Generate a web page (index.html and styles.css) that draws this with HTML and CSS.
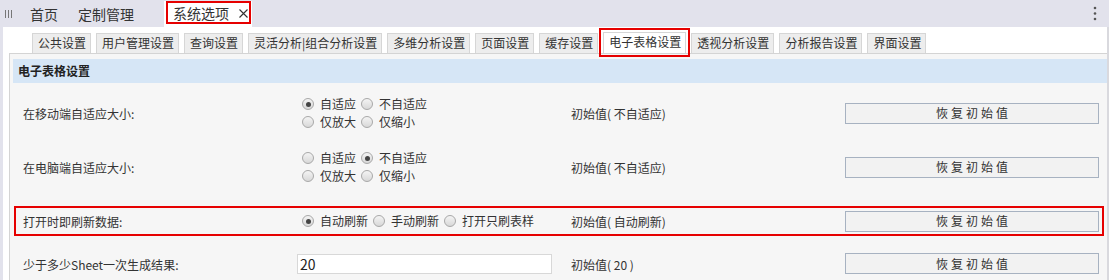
FILE: index.html
```html
<!DOCTYPE html>
<html lang="zh-CN">
<head>
<meta charset="utf-8">
<title>系统选项</title>
<link rel="stylesheet" href="styles.css">
</head>
<body>
<div class="app">
  <header class="topbar">
    <span class="grip"><svg width="8" height="8" viewBox="0 0 8 8"><path d="M0.5 0v8M3.5 0v8M6.5 0v8" stroke="#777" stroke-width="1"/></svg></span>
    <nav class="navtabs">
      <span class="navtab">首页</span>
      <span class="navtab">定制管理</span>
      <span class="navtab navtab-active"><span class="navtab-box">系统选项<svg class="close" width="9" height="9" viewBox="0 0 9 9"><path d="M0.5 0.5L8.5 8.5M8.5 0.5L0.5 8.5" stroke="#333" stroke-width="1.1"/></svg></span></span>
    </nav>
    <span class="more"><svg width="4" height="15" viewBox="0 0 4 15"><circle cx="2" cy="2" r="1.3" fill="#555"/><circle cx="2" cy="7.5" r="1.3" fill="#555"/><circle cx="2" cy="13" r="1.3" fill="#555"/></svg></span>
  </header>
  <main class="content">
    <div class="subtabs">
      <span class="subtab">公共设置</span>
      <span class="subtab">用户管理设置</span>
      <span class="subtab">查询设置</span>
      <span class="subtab">灵活分析|组合分析设置</span>
      <span class="subtab">多维分析设置</span>
      <span class="subtab">页面设置</span>
      <span class="subtab">缓存设置</span>
      <span class="subtab subtab-active">电子表格设置</span>
      <span class="subtab">透视分析设置</span>
      <span class="subtab">分析报告设置</span>
      <span class="subtab">界面设置</span>
    </div>
    <section class="panel">
      <div class="panel-head">电子表格设置</div>
      <div class="rows">
        <div class="row row-tall">
          <span class="label">在移动端自适应大小:</span>
          <div class="radios">
            <div class="radio-line">
              <label class="radio"><input type="radio" name="m" checked><span>自适应</span></label>
              <label class="radio"><input type="radio" name="m"><span>不自适应</span></label>
            </div>
            <div class="radio-line">
              <label class="radio"><input type="radio" name="m"><span>仅放大</span></label>
              <label class="radio"><input type="radio" name="m"><span>仅缩小</span></label>
            </div>
          </div>
          <span class="initial">初始值( 不自适应)</span>
          <button class="reset">恢复初始值</button>
        </div>
        <div class="row row-tall">
          <span class="label">在电脑端自适应大小:</span>
          <div class="radios">
            <div class="radio-line">
              <label class="radio"><input type="radio" name="p"><span>自适应</span></label>
              <label class="radio"><input type="radio" name="p" checked><span>不自适应</span></label>
            </div>
            <div class="radio-line">
              <label class="radio"><input type="radio" name="p"><span>仅放大</span></label>
              <label class="radio"><input type="radio" name="p"><span>仅缩小</span></label>
            </div>
          </div>
          <span class="initial">初始值( 不自适应)</span>
          <button class="reset">恢复初始值</button>
        </div>
        <div class="row row-highlight">
          <span class="label">打开时即刷新数据:</span>
          <div class="radios">
            <div class="radio-line">
              <label class="radio"><input type="radio" name="r" checked><span>自动刷新</span></label>
              <label class="radio"><input type="radio" name="r"><span>手动刷新</span></label>
              <label class="radio"><input type="radio" name="r"><span>打开只刷表样</span></label>
            </div>
          </div>
          <span class="initial">初始值( 自动刷新)</span>
          <button class="reset">恢复初始值</button>
        </div>
        <div class="row row-short">
          <span class="label">少于多少Sheet一次生成结果:</span>
          <div class="field"><input class="text-input" type="text" value="20"></div>
          <span class="initial">初始值( 20 )</span>
          <button class="reset">恢复初始值</button>
        </div>
      </div>
    </section>
  </main>
</div>
</body>
</html>
```

FILE: styles.css
```css
* { box-sizing: border-box; }

body {
  margin: 0;
  font-family: "Noto Sans CJK SC", "Microsoft YaHei", "Liberation Sans", sans-serif;
  font-size: 12px;
  color: #333;
  background: #fff;
}

.app {
  width: 1109px;
  height: 280px;
  overflow: hidden;
}

/* top bar */
.topbar {
  height: 27px;
  background: #e2e2ec;
  display: flex;
  align-items: stretch;
}

.grip {
  display: flex;
  align-items: center;
  padding-left: 5px;
  width: 20px;
}

.navtabs {
  display: flex;
  align-items: stretch;
  flex: 1;
}

.navtab {
  display: flex;
  align-items: center;
  padding: 0 10px;
  font-size: 14px;
  line-height: 18px;
  color: #333;
  white-space: nowrap;
}

.navtab-active {
  margin-left: 20px;
  margin-top: 1px;
  padding: 0 1px 3px 2px;
  background: #fff;
  align-items: stretch;
}

.navtab-box {
  display: flex;
  align-items: center;
  border: 2px solid #e60000;
  padding: 0 1px 0 5px;
  white-space: nowrap;
}

.close {
  margin-left: 10px;
  margin-top: 1px;
}

.more {
  display: flex;
  align-items: center;
  padding-right: 12px;
}

/* content */
.content {
  height: 253px;
  border-left: 3px solid #e2e2ec;
  border-right: 2px solid #d9d9de;
  background: #fff;
}

.subtabs {
  display: flex;
  align-items: flex-end;
  gap: 5px;
  height: 26px;
  padding-left: 29px;
}

.subtab {
  height: 20px;
  padding: 0 4px 0 5px;
  border: 1px solid #d6d6d6;
  border-bottom: none;
  background: #ededed;
  line-height: 18px;
  white-space: nowrap;
}

.subtab-active {
  background: #fff;
  height: 21px;
  outline: 2px solid #e60000;
  outline-offset: 2px;
  position: relative;
  z-index: 1;
}

.panel {
  margin-left: 6px;
  height: 227px;
  border-top: 1px solid #d4d4d4;
  border-left: 1px solid #d4d4d4;
  background: #f6f6f6;
  padding: 5px 0 0 3px;
}

.panel-head {
  height: 24px;
  line-height: 24px;
  padding-left: 5px;
  background: #d6e6f6;
  font-weight: bold;
  color: #222;
}

.rows {
  padding-top: 3px;
}

.row {
  display: grid;
  grid-template-columns: 279px 269px 274px 254px;
  align-items: center;
  padding-left: 10px;
}

.row-tall {
  height: 54px;
}

.row-highlight {
  height: 30px;
  margin: 12px 3px 6px 1px;
  padding-left: 7px;
  border: 2px solid #e60000;
}

.row-short {
  height: 43px;
}

.label {
  line-height: 18px;
  padding-top: 2px;
}

.radios {
  display: flex;
  flex-direction: column;
}

.radio-line {
  display: flex;
  height: 18px;
  align-items: center;
}

.radio {
  display: inline-flex;
  align-items: center;
  gap: 6px;
  margin-right: 5px;
  line-height: 18px;
}

.radio input {
  appearance: none;
  -webkit-appearance: none;
  margin: 0;
  width: 12px;
  height: 12px;
  border-radius: 50%;
  border: 1px solid #a8a8a8;
  background: linear-gradient(#f4f4f4, #d8d8d8);
  position: relative;
}

.radio input:checked::after {
  content: "";
  position: absolute;
  left: 2.5px;
  top: 2.5px;
  width: 5px;
  height: 5px;
  border-radius: 50%;
  background: #444;
}

.field {
  margin-left: -5px;
}

.text-input {
  width: 255px;
  height: 20px;
  border: 1px solid #d8d8d8;
  background: #fff;
  font-family: inherit;
  font-size: 14px;
  color: #222;
  padding: 0 2px;
  outline: none;
}

.initial {
  line-height: 18px;
  padding-top: 2px;
}

.reset {
  width: 254px;
  height: 21px;
  border: 1px solid #a7b2c1;
  background: #f2f2f2;
  font-family: inherit;
  font-size: 12px;
  color: #333;
  letter-spacing: 3px;
  padding: 0 0 0 3px;
  line-height: 18px;
}
```
